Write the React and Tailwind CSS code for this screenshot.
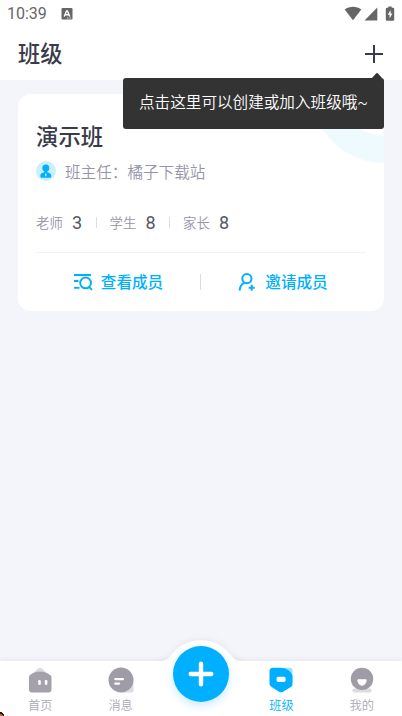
import React, { useState } from 'react';

const StatusBar = () => (
  <div className="flex h-7 shrink-0 items-center justify-between pl-[7px] pr-[6px] text-[#666666]">
    <div className="flex items-center">
      <span className="w-[41px] font-['Roboto','Noto_Sans',sans-serif] text-[16px] leading-7">10:39</span>
      <svg className="ml-[13px]" width="12" height="12" viewBox="0 0 12 12">
        <rect x="0.5" width="11" height="11.5" rx="1.2" fill="#666" />
        <path d="M3.2 8.5 5.6 3h.8l2.4 5.5M4.3 6.8h3.4" fill="none" stroke="#fff" strokeWidth="1.4" />
        <path d="M6 10h4" stroke="#fff" strokeWidth="0.8" strokeDasharray="1 .6" />
      </svg>
    </div>
    <svg className="-mt-[1px]" width="52" height="16" viewBox="0 0 52 16" fill="#666">
      <path d="M.7 3.6C5.5-.1 12.5-.1 17.3 3.6L9 14.300z" />
      <path d="M33.3 1.6v13H20.5z" />
      <path d="M44.3.6h3.4v1.200H49q1.200 0 1.200 1.200v10.600q0 1.200-1.200 1.200h-6q-1.200 0-1.200-1.200V3q0-1.200 1.200-1.200h1.300z" />
      <path d="M46.6 4 43.8 8.800h1.800v3.800l2.800-5h-1.800z" fill="#fff" />
    </svg>
  </div>
);

// dark hint bubble hanging from the add button
const AddHint = () => (
  <div className="absolute right-[18px] top-[78px] z-20 flex h-[51px] w-[261px] items-center rounded-[3px] bg-[#2c2c2c]/[0.97] pb-[1px] pl-4">
    <svg className="absolute -top-[5px] right-[2px]" width="10" height="5" viewBox="0 0 10 5">
      <path d="M0 5 4 .6Q5-.4 6 .6L10 5z" fill="#333" />
    </svg>
    <span className="whitespace-nowrap text-[15.6px] font-[350] text-white">
      点击这里可以创建或加入班级哦<span className="font-['Roboto',sans-serif]">~</span>
    </span>
  </div>
);

const TeacherIcon = () => (
  <svg width="20" height="20" viewBox="0 0 20 20">
    <circle cx="10" cy="10" r="10" fill="#ccefff" />
    <circle cx="9.8" cy="7" r="3.5" fill="#00b0ff" />
    <path d="M8.3 9h3v2.2c2.5.4 4 1.6 4 3.8 0 1.4-.6 1.8-1.7 1.8H6c-1.2 0-1.7-.4-1.7-1.8 0-2.2 1.5-3.4 4-3.8z" fill="#00b0ff" />
    <path d="M9.8 11.8 8.9 14l.9 1.8.9-1.8z" fill="#ccefff" />
  </svg>
);

const MemberListIcon = () => (
  <svg width="20" height="18" viewBox="0 0 20 18" fill="none" stroke="#00b0ff" strokeWidth="1.9">
    <path d="M1 2h17M1 8h4.500M1 14.900h5.500" />
    <circle cx="12.600" cy="9.900" r="5.400" />
    <path d="m16 13.800 3 3" />
  </svg>
);

const InviteIcon = () => (
  <svg width="18" height="18" viewBox="0 0 18 18" fill="none" stroke="#00b0ff" strokeWidth="2">
    <circle cx="8.900" cy="5.600" r="4.600" />
    <path d="M1.700 17.500c.1-3.600 1.600-6.400 4.700-7.700M13.700 11.700v6M10.700 14.700h6" />
  </svg>
);

const counts = [
  { label: '老师', value: 3 },
  { label: '学生', value: 8 },
  { label: '家长', value: 8 },
];

const ClassCard = () => (
  <section className="relative mx-[18px] mt-[14px] h-[217px] overflow-hidden rounded-[13px] bg-white px-[18px]">
    <div className="absolute -right-[77px] -top-[82px] h-[151px] w-[151px] rounded-full border-[27px] border-[#effaff]" />
    <h2 className="relative pt-[25px] text-[22.4px] font-medium leading-8 text-[#3a3b4a]">演示班</h2>
    <div className="mt-[10px] flex h-5 items-center">
      <TeacherIcon />
      <span className="-mt-[1px] ml-[9px] text-[15.6px] font-[350] leading-5 text-[#9595a8]">班主任：橘子下载站</span>
    </div>
    <div className="mt-[31px] flex h-5 items-center">
      {counts.map((item, i) => (
        <React.Fragment key={item.label}>
          {i > 0 && <span className="ml-[12.5px] mr-[13px] h-[11px] w-px bg-[#dddde6]" />}
          <span className="w-[27px] text-[13.4px] font-[350] text-[#9595a8]">{item.label}</span>
          <span className="ml-[8px] w-[12px] text-center font-['Roboto',sans-serif] text-[18px] text-[#555666]">{item.value}</span>
        </React.Fragment>
      ))}
    </div>
    <div className="mt-[20px] flex h-[59px] items-center border-t border-[#f3f3f6]">
      <button className="flex w-[164px] items-center justify-center text-[#00b0ff]">
        <MemberListIcon />
        <span className="ml-2 text-[15.6px] font-medium">查看成员</span>
      </button>
      <span className="h-4 w-px bg-[#dadae5]" />
      <button className="flex flex-1 items-center justify-center pr-[1px] text-[#00b0ff]">
        <InviteIcon />
        <span className="ml-[9px] text-[15.6px] font-medium">邀请成员</span>
      </button>
    </div>
  </section>
);

const HomeIcon = () => (
  <svg width="26" height="26" viewBox="0 0 26 26">
    <path d="M6.5 5.500 11 1.600q2-1.500 4 0l4.500 3.900z" fill="#dcdbe2" />
    <path d="M2 10q0-1.500 1.300-2.300C9 3.300 17 3.300 22.700 7.700Q24.500 8.600 24.500 10v12.500q0 3-3 3H5q-3 0-3-3z" fill="#a5a1ac" />
    <rect x="11.200" y="13" width="2.600" height="5" rx="1.300" fill="#fff" />
    <rect x="17.800" y="13" width="2.600" height="5" rx="1.300" fill="#fff" />
  </svg>
);

const MessageIcon = () => (
  <svg width="26" height="26" viewBox="0 0 26 26">
    <path d="M14 15h11.500v8.500q0 2-2 2H14z" fill="#dcdbe2" />
    <circle cx="13" cy="13" r="12.500" fill="#a09ca7" />
    <path d="M7.300 12.200h7.600M7.300 16.600h3.800" stroke="#fff" strokeWidth="2.200" strokeLinecap="round" />
  </svg>
);

const ClassIcon = () => (
  <svg width="26" height="26" viewBox="0 0 26 26">
    <path d="M12 .8h9.500q3 0 3 3V15H12z" fill="#99dfff" />
    <path d="M5 .8h7c6 0 11 3 12.500 8.200v8.500q0 1.500-1.300 2.200l-8.500 5.200q-1.700.9-3.400 0l-8-5.200Q1.500 18.800 1.500 17V4.300Q1.500.8 5 .8z" fill="#00b0ff" />
    <rect x="8.600" y="9.800" width="9" height="5.200" rx="1.700" fill="#fff" />
  </svg>
);

const MineIcon = () => (
  <svg width="26" height="26" viewBox="0 0 26 26">
    <rect x="3.500" y="21.500" width="19" height="4" rx="1.800" fill="#dcdbe2" />
    <circle cx="13" cy="11.900" r="11.200" fill="#a09ca7" />
    <path d="M8.800 12.800h8.400c0 7.200-8.400 7.200-8.400 0z" fill="#fff" stroke="#fff" strokeLinejoin="round" />
  </svg>
);

const tabs = [
  { key: 'home', label: '首页', Icon: HomeIcon },
  { key: 'message', label: '消息', Icon: MessageIcon },
  null,
  { key: 'class', label: '班级', Icon: ClassIcon },
  { key: 'mine', label: '我的', Icon: MineIcon },
];

const TabBar = ({ active, onChange }) => (
  <nav className="relative grid h-[55px] shrink-0 grid-cols-5 bg-white shadow-[0_-1px_5px_rgba(60,60,90,0.07)]">
    {/* raised hump behind the middle button */}
    <svg className="absolute -top-[30px] left-1/2 -ml-[50px]" width="100" height="60" viewBox="0 0 100 60">
      <path d="M9 30c8 0 9-4 13-8C36 5 64 5 78 22c4 4 5 8 13 8v6H9z" fill="#fff" className="drop-shadow-[0_-1px_3px_rgba(60,60,90,0.07)]" />
      <rect y="30" width="100" height="30" fill="#fff" />
    </svg>
    {tabs.map((tab) =>
      tab ? (
        <button
          key={tab.key}
          onClick={() => onChange(tab.key)}
          className={`relative flex flex-col items-center pt-[6px] ${active === tab.key ? 'text-[#00b0ff]' : 'text-[#aaa9b7]'}`}
        >
          <tab.Icon />
          <span className="mt-[4px] text-[12.2px] font-[350] leading-4">{tab.label}</span>
        </button>
      ) : (
        <div key="add" className="relative flex justify-center">
          <button className="-mt-[15.5px] ml-[1px] flex h-14 w-14 items-center justify-center rounded-full bg-[#00b0ff] shadow-[0_4px_9px_rgba(0,150,255,0.2)]">
            <svg width="26" height="26" viewBox="0 0 26 26" stroke="#fff" strokeWidth="4.4" strokeLinecap="round">
              <path d="M13 2.700v20.600M2.700 13h20.600" />
            </svg>
          </button>
        </div>
      )
    )}
  </nav>
);

const App = () => {
  const [active, setActive] = useState('class');

  return (
    <div className="relative flex h-screen w-full flex-col overflow-hidden bg-[#f4f5fa] font-['Noto_Sans_CJK_SC',sans-serif]">
      <div className="h-20 shrink-0 bg-white">
        <StatusBar />
        <header className="flex h-[52px] items-center justify-between pl-[18px] pr-[19px]">
          <h1 className="-mt-[4px] text-[22.2px] font-medium leading-8 text-[#3a3b4a]">班级</h1>
          <button aria-label="添加">
            <svg width="18" height="18" viewBox="0 0 18 18" stroke="#3a3b4a" strokeWidth="2">
              <path d="M9 0v18M0 9h18" />
            </svg>
          </button>
        </header>
      </div>
      <AddHint />
      <main className="flex-1">
        <ClassCard />
      </main>
      <TabBar active={active} onChange={setActive} />
      {/* clipped corner ornament */}
      <svg className="absolute bottom-0 left-0" width="5" height="4" viewBox="0 0 5 4">
        <path d="M0 0h2v1h1v1h1v2H0z" fill="#1d1510" />
        <path d="M0 2h2v1h1v1H0z" fill="#d9601c" />
      </svg>
    </div>
  );
};

export default App;
